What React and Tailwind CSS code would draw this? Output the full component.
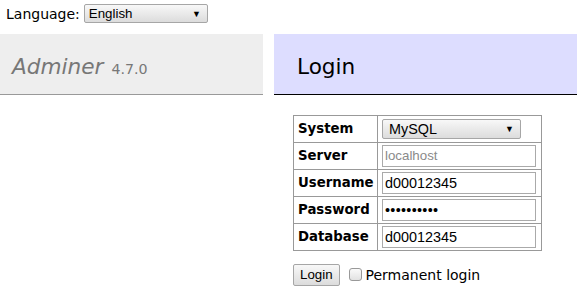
export default function App() {
  const rows = [
    ['System', 'select', 'MySQL'],
    ['Server', 'placeholder', 'localhost'],
    ['Username', 'text', 'd00012345'],
    ['Password', 'password', '••••••••••'],
    ['Database', 'text', 'd00012345'],
  ];
  return (
    <div className="w-[577px] h-[304px] bg-white text-black font-['DejaVu_Sans',sans-serif] text-[14px] leading-[18px] overflow-hidden">
      <div className="flex items-center h-[26px] pl-[6px] pt-[1px]">
        <span className="mr-[4px]">Language:</span>
        <div className="flex items-center justify-between w-[124px] h-[19px] border border-[#a6a6a6] rounded-[2px] bg-gradient-to-b from-[#f8f8f8] to-[#dcdcdc] pl-[4px] pr-[6px] font-['Liberation_Sans',sans-serif] text-[13.3px]">
          <span>English</span>
          <span className="text-[9px]">▼</span>
        </div>
      </div>
      <div className="flex mt-[8px]">
        <div className="w-[263px] h-[61px] bg-[#eee] border-b border-[#999] flex items-center pl-[12px] pt-[5px] italic text-[#777]">
          <span className="text-[21.6px]">Adminer</span>
          <span className="text-[14.2px] not-italic ml-[8px] mt-[5px]">4.7.0</span>
        </div>
        <div className="ml-[11px] flex-1 h-[61px] bg-[#ddf] border-b border-black flex items-center pl-[23px] pt-[5px]">
          <span className="text-[21.6px]">Login</span>
        </div>
      </div>
      <div className="pl-[293px] pt-[20px]">
        <table className="border-collapse border border-[#999] table-fixed">
          <tbody>
            {rows.map(([label, kind, value]) => (
              <tr key={label} className="h-[26.6px]">
                <th className="border border-[#999] w-[84px] text-left font-bold text-[13.3px] pl-[4px] pr-[2px]">{label}</th>
                <td className="border border-[#999] w-[164px] pl-[4px] pr-[4px] py-[2px]">
                  {kind === 'select' ? (
                    <div className="flex items-center justify-between w-[139px] h-[20px] border border-[#a6a6a6] rounded-[2px] bg-gradient-to-b from-[#f8f8f8] to-[#dcdcdc] pl-[6px] pr-[6px] font-['Liberation_Sans',sans-serif] text-[14.4px]">
                      <span>{value}</span>
                      <span className="text-[9px]">▼</span>
                    </div>
                  ) : (
                    <div className={`flex items-center w-[154px] h-[22px] border border-[#aaa] pl-[2px] font-['Liberation_Sans',sans-serif] ${kind === 'placeholder' ? 'text-[#8a8a8a] text-[13.3px]' : 'text-black text-[14.4px]'} ${kind === 'password' ? 'text-[8px] tracking-[0.3px]' : ''}`}>
                      {value}
                    </div>
                  )}
                </td>
              </tr>
            ))}
          </tbody>
        </table>
        <div className="flex items-center mt-[13px]">
          <div className="h-[22px] px-[6px] flex items-center border border-[#a6a6a6] rounded-[2px] bg-gradient-to-b from-[#f8f8f8] to-[#dcdcdc] font-['Liberation_Sans',sans-serif] text-[13.3px]">
            Login
          </div>
          <div className="ml-[9px] w-[13px] h-[13px] border border-[#999] rounded-[3px] bg-gradient-to-b from-[#fafafa] to-[#e2e2e2]"></div>
          <span className="ml-[4px]">Permanent login</span>
        </div>
      </div>
    </div>
  );
}
